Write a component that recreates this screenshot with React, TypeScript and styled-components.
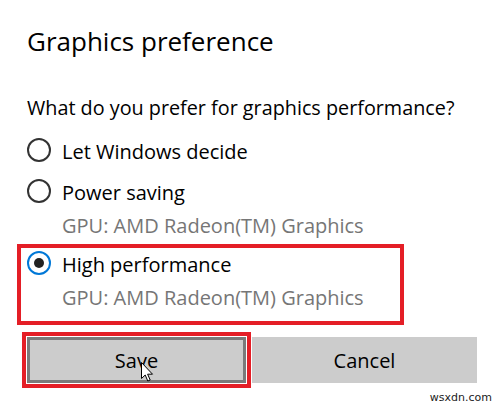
import React from 'react';
import styled, { createGlobalStyle } from 'styled-components';

const GlobalStyle = createGlobalStyle`
  html, body {
    margin: 0;
    padding: 0;
    background: #ffffff;
  }
  body {
    font-family: 'Open Sans', 'Noto Sans', sans-serif;
    color: #000000;
  }
`;

const Page = styled.div`
  position: relative;
  width: 504px;
  height: 407px;
  padding: 23px 0 0 27px;
  box-sizing: border-box;
  overflow: hidden;
`;

const Title = styled.h1`
  margin: 0;
  font-size: 26px;
  font-weight: 400;
  line-height: 36px;
  color: #000;
`;

const Question = styled.p`
  margin: 33px 0 0;
  font-size: 19.8px;
  line-height: 32px;
`;

const Options = styled.div`
  display: flex;
  flex-direction: column;
  margin-top: 11px;
`;

const Highlight = styled.div`
  width: 373px;
  margin-left: -10px;
  padding: 0 0 5px 6px;
  border: 4px solid #e41e26;
`;

const Option = styled.label<{ $gap?: number }>`
  display: grid;
  grid-template-columns: 24px 1fr;
  column-gap: 11px;
  margin-top: ${p => p.$gap ?? 0}px;
`;

const Radio = styled.span<{ $checked?: boolean }>`
  position: relative;
  width: 24px;
  height: 24px;
  margin-top: 3px;
  box-sizing: border-box;
  border-radius: 50%;
  border: 2.5px solid ${p => (p.$checked ? '#0078d7' : '#333333')};

  &::after {
    content: '';
    display: ${p => (p.$checked ? 'block' : 'none')};
    position: absolute;
    left: 50%;
    top: 50%;
    width: 10px;
    height: 10px;
    margin: -5px 0 0 -5px;
    border-radius: 50%;
    background: #222222;
  }
`;

const Label = styled.span`
  padding-top: 2px;
  font-size: 20px;
  line-height: 30px;
`;

const Sub = styled.span`
  grid-column: 2;
  font-size: 20px;
  line-height: 36px;
  color: #767676;
`;

const Buttons = styled.div`
  display: grid;
  grid-template-columns: 219px 225px;
  column-gap: 6px;
  margin-top: 12px;
`;

const Button = styled.button<{ $focused?: boolean }>`
  position: relative;
  height: 46px;
  padding: 0;
  box-sizing: border-box;
  border: 3px solid ${p => (p.$focused ? '#7a7a7a' : '#cccccc')};
  background: #cccccc;
  font-family: inherit;
  font-size: 20px;
  color: #000;
  outline: ${p => (p.$focused ? '4px solid #e41e26' : 'none')};
  outline-offset: 1px;
`;

const Cursor = styled.svg`
  position: absolute;
  left: 111px;
  top: 22px;
`;

const Watermark = styled.span`
  position: absolute;
  right: 12px;
  bottom: 3px;
  font-family: 'DejaVu Sans', sans-serif;
  font-size: 11px;
  color: #222;
`;

type Choice = { label: string; gpu?: string; checked?: boolean };

const RadioOption: React.FC<Choice & { gap?: number }> = ({ label, gpu, checked, gap }) => (
  <Option $gap={gap}>
    <Radio $checked={checked} />
    <Label>{label}</Label>
    {gpu && <Sub>{gpu}</Sub>}
  </Option>
);

export default function App() {
  const gpu = 'GPU: AMD Radeon(TM) Graphics';
  return (
    <>
      <GlobalStyle />
      <Page>
        <Title>Graphics preference</Title>
        <Question>What do you prefer for graphics performance?</Question>
        <Options>
          <RadioOption label="Let Windows decide" />
          <RadioOption label="Power saving" gpu={gpu} gap={9} />
          <Highlight>
            <RadioOption label="High performance" gpu={gpu} checked />
          </Highlight>
        </Options>
        <Buttons>
          <Button $focused>
            Save
            <Cursor width="13" height="20" viewBox="0 0 13 20">
              <path
                d="M0.5 0.5 L0.5 16.5 L4.2 13 L6.8 19 L9.2 18 L6.6 12.2 L11.5 12.2 Z"
                fill="#ffffff"
                stroke="#000000"
                strokeWidth="1"
                strokeLinejoin="miter"
              />
            </Cursor>
          </Button>
          <Button>Cancel</Button>
        </Buttons>
        <Watermark>wsxdn.com</Watermark>
      </Page>
    </>
  );
}
